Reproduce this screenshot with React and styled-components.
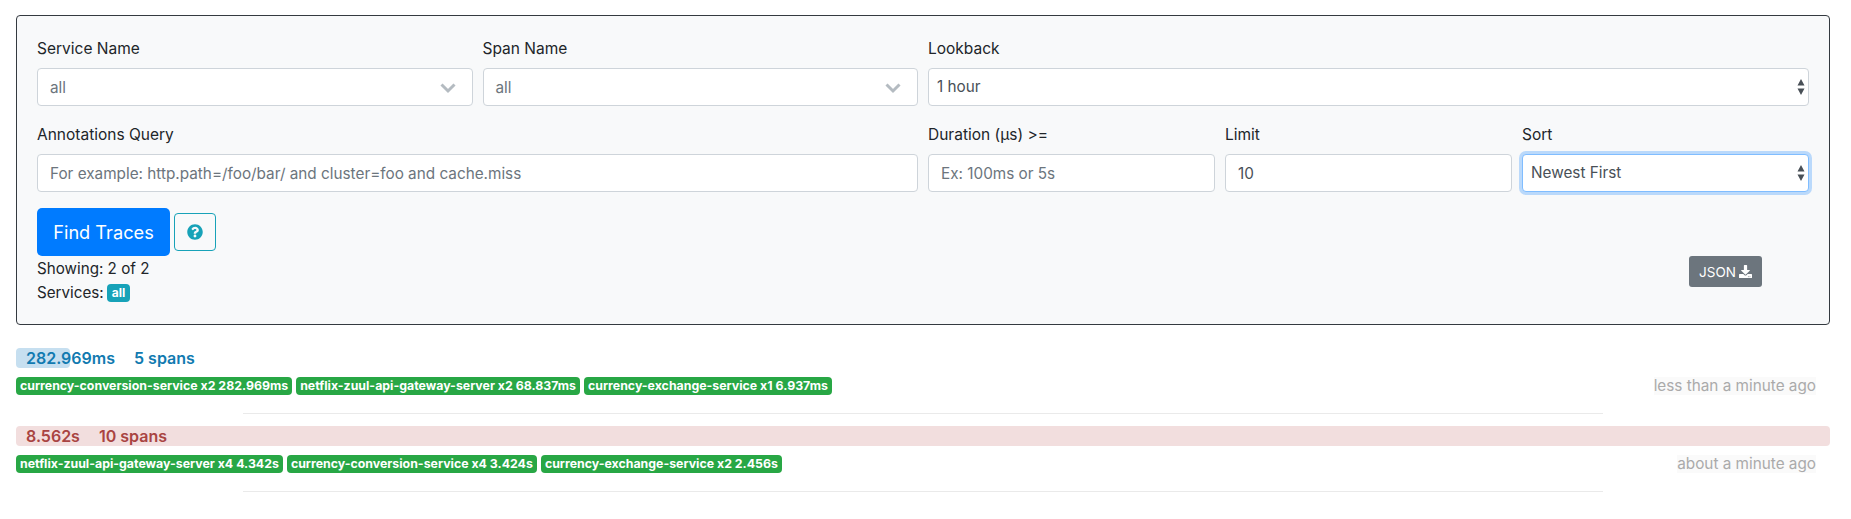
import React from "react";
import styled, { createGlobalStyle } from "styled-components";

const Global = createGlobalStyle`
  html, body { margin: 0; padding: 0; background: #fff; }
  body { font-family: Inter, "Liberation Sans", Arial, sans-serif; font-size: 16px; color: #212529; }
  * { box-sizing: border-box; }
`;

const Page = styled.div`
  padding: 15px 21px 0 16px;
  width: 1851px;
`;

const Panel = styled.form`
  height: 310px;
  background: #f8f9fa;
  border: 1px solid #343a40;
  border-radius: 4px;
  padding: 20px 20px 0;
  margin: 0;
`;

const FormGrid = styled.div`
  display: grid;
  grid-template-columns: repeat(12, 1fr);
  column-gap: 10px;
  row-gap: 16px;
`;

const Field = styled.div`
  grid-column: span ${(p) => p.$span};
  min-width: 0;
`;

const Label = styled.label`
  display: block;
  height: 24px;
  line-height: 26px;
  margin-bottom: 8px;
  font-size: 15.5px;
  color: #212529;
`;

const Control = styled.div`
  position: relative;
  height: 38px;
  background: #fff;
  border: 1px solid #ced4da;
  border-radius: 4px;
  display: flex;
  align-items: center;
  padding: 0 ${(p) => (p.$native ? "8px 2px" : "12px")};
  font-size: 15.3px;
  color: ${(p) => (p.$muted ? "#6c757d" : "#495057")};
  ${(p) =>
    p.$focus &&
    `
    border-color: #80bdff;
    box-shadow: 0 0 0 3px rgba(0,123,255,.25);
  `}
`;

const Chevron = styled.svg`
  position: absolute;
  right: 16px;
  top: 14px;
  width: 16px;
  height: 11px;
`;

const Stepper = styled.svg`
  position: absolute;
  right: 3px;
  top: 10px;
  width: 8px;
  height: 16px;
`;

const Actions = styled.div`
  display: flex;
  align-items: center;
  margin-top: 16px;
  gap: 4px;
`;

const FindButton = styled.button`
  width: 133px;
  height: 48px;
  background: #007bff;
  color: #fff;
  border: 0;
  border-radius: 5px;
  font: 400 18.2px Inter, "Liberation Sans", Arial, sans-serif;
  padding: 0;
`;

const HelpButton = styled.button`
  width: 42px;
  height: 38px;
  background: transparent;
  border: 1px solid #17a2b8;
  border-radius: 4px;
  padding: 0;
  display: flex;
  align-items: center;
  justify-content: center;
`;

const Footer = styled.div`
  display: flex;
  justify-content: space-between;
  align-items: flex-start;
`;

const Stats = styled.div`
  padding-top: 1px;
  line-height: 24px;
  font-size: 15.2px;
`;

const ServicesLine = styled.div`
  display: flex;
  align-items: center;
  gap: 3px;
  height: 24px;
`;

const InfoBadge = styled.span`
  background: #17a2b8;
  color: #fff;
  font-size: 12px;
  font-weight: 700;
  line-height: 18px;
  height: 18px;
  padding: 0 5px;
  border-radius: 4px;
`;

const JsonButton = styled.button`
  width: 73px;
  height: 31px;
  margin-right: 47px;
  background: #6c757d;
  color: #fff;
  border: 0;
  border-radius: 3px;
  font: 400 13.5px Inter, "Liberation Sans", Arial, sans-serif;
  padding: 0;
  display: flex;
  align-items: center;
  justify-content: center;
  gap: 3px;
`;

const Traces = styled.div`
  margin-top: 23px;
`;

const Trace = styled.div`
  margin-bottom: 12px;
`;

const Bar = styled.div`
  position: relative;
  height: 20px;
  display: flex;
  align-items: center;
  gap: 19px;
  padding-left: 10px;
  font-size: 16px;
  font-weight: 600;
  color: ${(p) => (p.$tone === "red" ? "#a94442" : "#117ab0")};
`;

const BarFill = styled.div`
  position: absolute;
  inset: 0 auto 0 0;
  border-radius: 4px;
  background: ${(p) => (p.$tone === "red" ? "#f2dede" : "#c6dff0")};
`;

const BarText = styled.span`
  position: relative;
`;

const TagRow = styled.div`
  display: flex;
  justify-content: space-between;
  align-items: flex-start;
  margin-top: 9px;
  padding-right: 14px;
`;

const Tags = styled.div`
  display: flex;
  gap: 4px;
`;

const Tag = styled.span`
  height: 18px;
  line-height: 18px;
  padding: 0 4px;
  border-radius: 4px;
  background: #28a745;
  color: #fff;
  font-size: 12.35px;
  font-weight: 700;
  white-space: nowrap;
`;

const When = styled.span`
  height: 18px;
  line-height: 17px;
  font-size: 15.3px;
  color: #aaa;
  background: #fafafa;
`;

const Rule = styled.hr`
  width: 75%;
  height: 1px;
  border: 0;
  background: #eaeaea;
  margin: 18px auto 0;
`;

const SelectChevron = () => (
  <Chevron viewBox="0 0 16 11">
    <path d="M1.500 1.500L8 8l6.500-6.500" fill="none" stroke="#b4bbc1" strokeWidth="3" />
  </Chevron>
);

const SelectStepper = () => (
  <Stepper viewBox="0 0 8 16">
    <path d="M4 0l3.500 6.500H.5z M4 16L.5 9.500h7z" fill="#495057" />
  </Stepper>
);

const traces = [
  {
    tone: "blue",
    fill: "54px",
    duration: "282.969ms",
    spans: "5 spans",
    when: "less than a minute ago",
    tags: [
      "currency-conversion-service x2 282.969ms",
      "netflix-zuul-api-gateway-server x2 68.837ms",
      "currency-exchange-service x1 6.937ms",
    ],
  },
  {
    tone: "red",
    fill: "100%",
    duration: "8.562s",
    spans: "10 spans",
    when: "about a minute ago",
    tags: [
      "netflix-zuul-api-gateway-server x4 4.342s",
      "currency-conversion-service x4 3.424s",
      "currency-exchange-service x2 2.456s",
    ],
  },
];

export default function App() {
  return (
    <Page>
      <Global />
      <Panel>
        <FormGrid>
          <Field $span={3}>
            <Label>Service Name</Label>
            <Control $muted>all<SelectChevron /></Control>
          </Field>
          <Field $span={3}>
            <Label>Span Name</Label>
            <Control $muted>all<SelectChevron /></Control>
          </Field>
          <Field $span={6}>
            <Label>Lookback</Label>
            <Control $native>1 hour<SelectStepper /></Control>
          </Field>
          <Field $span={6}>
            <Label>Annotations Query</Label>
            <Control $muted>For example: http.path=/foo/bar/ and cluster=foo and cache.miss</Control>
          </Field>
          <Field $span={2}>
            <Label>Duration (μs) &gt;=</Label>
            <Control $muted>Ex: 100ms or 5s</Control>
          </Field>
          <Field $span={2}>
            <Label>Limit</Label>
            <Control>10</Control>
          </Field>
          <Field $span={2}>
            <Label>Sort</Label>
            <Control $native $focus>Newest First<SelectStepper /></Control>
          </Field>
        </FormGrid>
        <Actions>
          <FindButton type="button">Find Traces</FindButton>
          <HelpButton type="button" aria-label="help">
            <svg width="16" height="16" viewBox="0 0 512 512">
              <path fill="#17a2b8" d="M504 256c0 137-111 248-248 248S8 393 8 256 119 8 256 8s248 111 248 248zM262.700 90c-54.500 0-89.300 23-116.600 63.800-3.500 5.300-2.400 12.400 2.700 16.300l34.700 26.300c5.200 3.900 12.600 3 16.700-2.100 17.900-22.700 30.100-35.800 57.300-35.800 20.400 0 45.700 13.100 45.700 32.900 0 15-12.400 22.700-32.500 34C247.100 238.500 216 254.900 216 296v4c0 6.600 5.400 12 12 12h56c6.600 0 12-5.400 12-12v-1.300c0-28.500 83.200-29.600 83.200-106.700 0-58-60.200-102-116.500-102zM256 338c-25.400 0-46 20.600-46 46 0 25.400 20.600 46 46 46s46-20.600 46-46c0-25.400-20.600-46-46-46z" />
            </svg>
          </HelpButton>
        </Actions>
        <Footer>
          <Stats>
            <div>Showing: 2 of 2</div>
            <ServicesLine>Services: <InfoBadge>all</InfoBadge></ServicesLine>
          </Stats>
          <JsonButton type="button">
            JSON
            <svg width="13" height="13" viewBox="0 0 512 512">
              <path fill="#fff" d="M216 0h80c13.300 0 24 10.700 24 24v168h87.700c17.800 0 26.700 21.500 14.100 34.100L269.700 378.300c-7.500 7.500-19.800 7.500-27.300 0L90.100 226.100c-12.600-12.600-3.700-34.100 14.100-34.100H192V24c0-13.300 10.700-24 24-24zm296 376v112c0 13.300-10.700 24-24 24H24c-13.300 0-24-10.700-24-24V376c0-13.300 10.700-24 24-24h146.700l49 49c20.100 20.100 52.500 20.100 72.600 0l49-49H488c13.300 0 24 10.700 24 24zm-124 88c0-11-9-20-20-20s-20 9-20 20 9 20 20 20 20-9 20-20zm64 0c0-11-9-20-20-20s-20 9-20 20 9 20 20 20 20-9 20-20z" />
            </svg>
          </JsonButton>
        </Footer>
      </Panel>
      <Traces>
        {traces.map((t) => (
          <Trace key={t.duration}>
            <Bar $tone={t.tone}>
              <BarFill $tone={t.tone} style={{ width: t.fill }} />
              <BarText>{t.duration}</BarText>
              <BarText>{t.spans}</BarText>
            </Bar>
            <TagRow>
              <Tags>
                {t.tags.map((tag) => (
                  <Tag key={tag}>{tag}</Tag>
                ))}
              </Tags>
              <When>{t.when}</When>
            </TagRow>
            <Rule />
          </Trace>
        ))}
      </Traces>
    </Page>
  );
}
